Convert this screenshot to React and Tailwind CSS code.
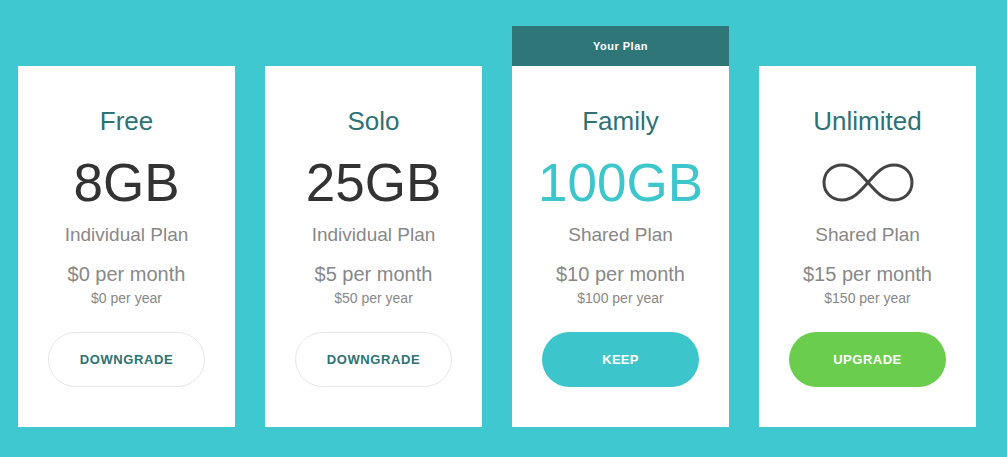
const plans = [
  { name: "Free", size: "8GB", kind: "Individual Plan", month: "$0 per month", year: "$0 per year", action: "DOWNGRADE", style: "downgrade" },
  { name: "Solo", size: "25GB", kind: "Individual Plan", month: "$5 per month", year: "$50 per year", action: "DOWNGRADE", style: "downgrade" },
  { name: "Family", size: "100GB", kind: "Shared Plan", month: "$10 per month", year: "$100 per year", action: "KEEP", style: "keep", current: true },
  { name: "Unlimited", size: null, kind: "Shared Plan", month: "$15 per month", year: "$150 per year", action: "UPGRADE", style: "upgrade" },
];

function Infinity() {
  return (
    <svg width="94" height="41" viewBox="0 0 94 41" fill="none">
      <path
        d="M47 20.5 C37 9 31 3 21 3 C10 3 3 11 3 20.5 C3 30 10 38 21 38 C31 38 37 32 47 20.5 C57 9 63 3 73 3 C84 3 91 11 91 20.5 C91 30 84 38 73 38 C63 38 57 32 47 20.5 Z"
        stroke="#444"
        strokeWidth="3"
      />
    </svg>
  );
}

function PlanButton({ plan }) {
  if (plan.style === "keep") {
    return (
      <button className="flex h-[55px] w-[157px] items-center justify-center rounded-full bg-[#3dc5cc] text-[13px] font-bold tracking-[0.3px] text-white">
        {plan.action}
      </button>
    );
  }
  if (plan.style === "upgrade") {
    return (
      <button className="flex h-[55px] w-[157px] items-center justify-center rounded-full bg-[#6acd4e] text-[13px] font-bold tracking-[0.5px] text-white">
        {plan.action}
      </button>
    );
  }
  return (
    <button className="flex h-[55px] w-[157px] items-center justify-center rounded-full border border-[#e6e6e6] bg-white text-[13px] font-bold tracking-[0.6px] text-[#2d7376]">
      {plan.action}
    </button>
  );
}

function PlanCard({ plan }) {
  return (
    <div className="flex w-[217px] flex-col">
      {plan.current && (
        <div className="flex h-[40px] items-center justify-center bg-[#2e7678] text-[11px] font-bold tracking-[0.5px] text-white">
          Your Plan
        </div>
      )}
      <div className="flex h-[361px] flex-col items-center bg-white pt-[42px]">
        <div className="text-[26px] leading-none text-[#2d7275]">{plan.name}</div>
        <div className="mt-[21px] flex h-[54px] items-center justify-center">
          {plan.size ? (
            <span className={`text-[53px] leading-none ${plan.current ? "text-[#3ec6cd]" : "text-[#333]"}`}>
              {plan.size}
            </span>
          ) : (
            <Infinity />
          )}
        </div>
        <div className="mt-[16px] text-[19px] leading-none text-[#888]">{plan.kind}</div>
        <div className="mt-[20px] text-[20px] leading-none text-[#888]">{plan.month}</div>
        <div className="mt-[7px] text-[14px] leading-none text-[#888]">{plan.year}</div>
        <div className="mt-[27px]">
          <PlanButton plan={plan} />
        </div>
      </div>
    </div>
  );
}

export default function App() {
  return (
    <div
      className="flex h-[457px] w-[1007px] items-end gap-[30px] bg-[#3fc8cf] pb-[30px] pl-[18px]"
      style={{ fontFamily: '"Liberation Sans", Arial, sans-serif' }}
    >
      {plans.map((plan) => (
        <PlanCard key={plan.name} plan={plan} />
      ))}
    </div>
  );
}
